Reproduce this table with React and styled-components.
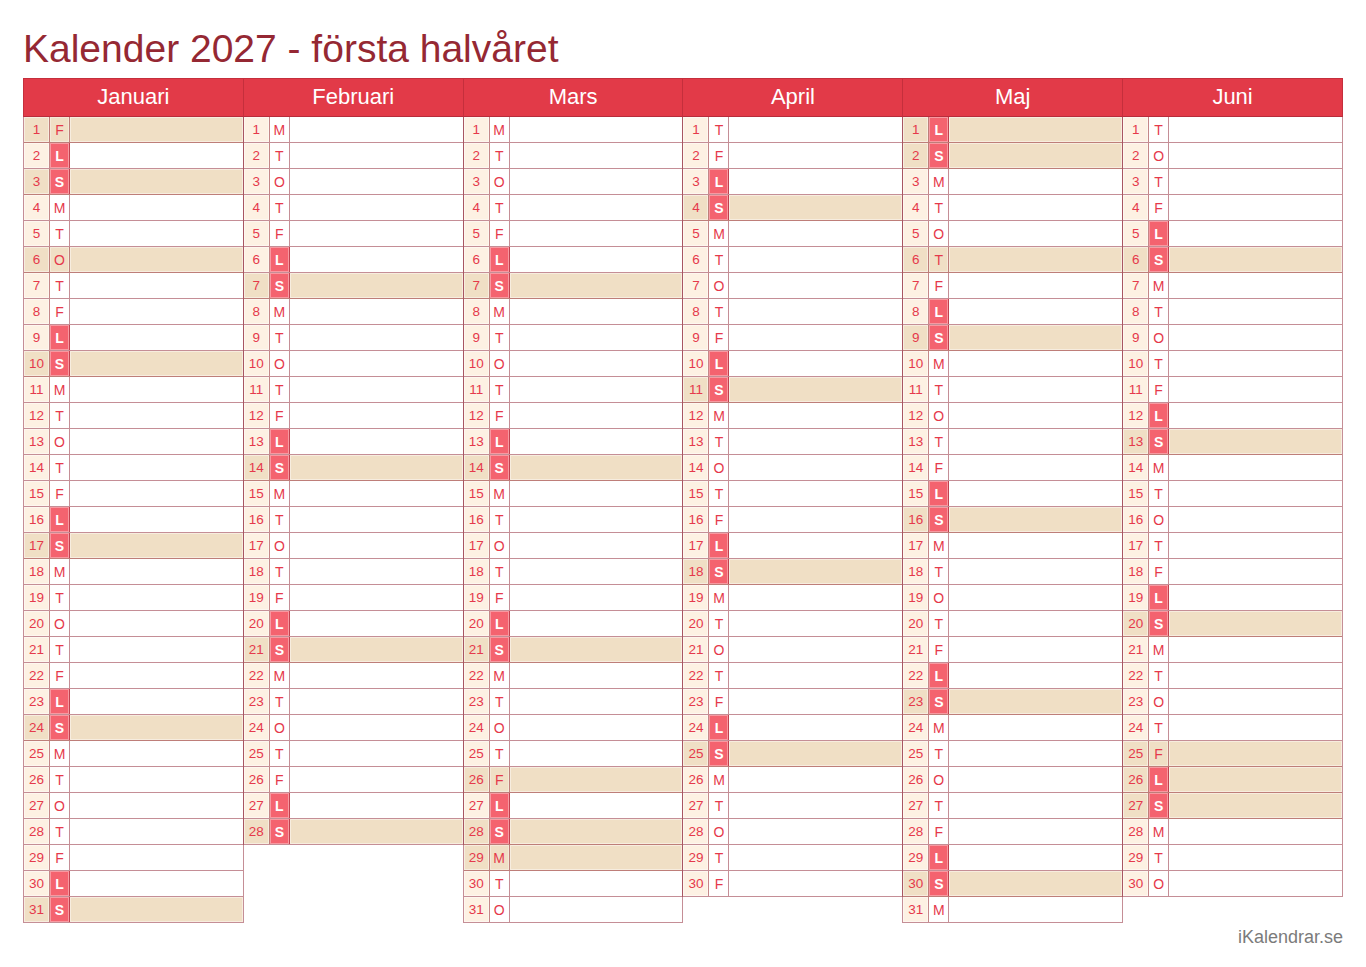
import React from "react";
import styled, { createGlobalStyle } from "styled-components";

const GlobalStyle = createGlobalStyle`
  body {
    margin: 0;
    background: #ffffff;
    font-family: "Liberation Sans", Arial, sans-serif;
  }
`;

const MONTHS = ["Januari", "Februari", "Mars", "April", "Maj", "Juni"];
const LETTERS = ["S", "M", "T", "O", "T", "F", "L"];
// helgdagar that fall on a weekday or a Saturday get the beige row
const HOLIDAYS = ["0-1", "0-6", "2-26", "2-28", "2-29", "4-1", "4-6", "4-16", "5-6", "5-25", "5-26"];

const LINE = "rgba(140, 30, 45, 0.5)";

const Page = styled.div`
  width: 1366px;
  height: 967px;
  padding: 0 23px;
  box-sizing: border-box;
`;

const Title = styled.h1`
  margin: 0 0 10px 0;
  padding-top: 29px;
  font-size: 39px;
  line-height: 39px;
  font-weight: normal;
  color: #952833;
`;

const Grid = styled.div`
  display: flex;
  align-items: flex-start;
`;

const Column = styled.div`
  width: 221px;
  box-sizing: border-box;
  border: 1px solid ${LINE};
  border-top: none;
  margin-left: ${(p) => (p.$first ? "0" : "-1px")};
`;

const MonthHeader = styled.div`
  height: 35px;
  padding-bottom: 2px;
  margin: 0 -1px;
  background: #e23a48;
  border: 1px solid #c52f3c;
  border-bottom: 1px solid ${LINE};
  color: #ffffff;
  font-size: 22px;
  display: flex;
  align-items: center;
  justify-content: center;
`;

const Row = styled.div`
  display: flex;
  height: 25px;
  border-bottom: 1px solid ${LINE};
  background: ${(p) => (p.$marked ? "#f0dfc5" : "#ffffff")};

  &:last-child {
    border-bottom: none;
  }
`;

const NumCell = styled.div`
  width: 25px;
  border-right: 1px solid ${LINE};
  background: ${(p) => (p.$marked ? "#f0dfc5" : "#fdf1e3")};
  box-shadow: inset 0 0 0 1px rgba(255, 255, 255, 0.45);
  color: #e5394b;
  font-size: 13.5px;
  display: flex;
  align-items: center;
  justify-content: center;
`;

const DayCell = styled.div`
  width: 19px;
  border-right: 1px solid ${LINE};
  background: ${(p) => (p.$weekend ? "#f4636f" : p.$marked ? "#f0dfc5" : "#ffffff")};
  box-shadow: inset 0 0 0 1px rgba(255, 255, 255, 0.35);
  color: ${(p) => (p.$weekend ? "#ffffff" : "#e5394b")};
  font-weight: ${(p) => (p.$weekend ? "bold" : "normal")};
  font-size: 14px;
  display: flex;
  align-items: center;
  justify-content: center;
`;

const NoteCell = styled.div`
  flex: 1;
  box-shadow: ${(p) => (p.$marked ? "inset 0 0 0 1px rgba(255, 255, 255, 0.45)" : "none")};
`;

const Footer = styled.div`
  margin-top: 5px;
  text-align: right;
  font-size: 18px;
  line-height: 18px;
  color: #7b7b7b;
`;

const monthDays = (m) => {
  const count = new Date(2027, m + 1, 0).getDate();
  return Array.from({ length: count }, (_, i) => {
    const d = i + 1;
    const wd = new Date(2027, m, d).getDay();
    const weekend = wd === 0 || wd === 6;
    const holiday = HOLIDAYS.includes(`${m}-${d}`);
    return { d, letter: LETTERS[wd], weekend, marked: wd === 0 || holiday };
  });
};

const App = () => (
  <Page>
    <GlobalStyle />
    <Title>Kalender 2027 - första halvåret</Title>
    <Grid>
      {MONTHS.map((name, m) => (
        <Column key={name} $first={m === 0}>
          <MonthHeader>{name}</MonthHeader>
          {monthDays(m).map((day) => (
            <Row key={day.d} $marked={day.marked}>
              <NumCell $marked={day.marked}>{day.d}</NumCell>
              <DayCell $marked={day.marked} $weekend={day.weekend}>
                {day.letter}
              </DayCell>
              <NoteCell $marked={day.marked} />
            </Row>
          ))}
        </Column>
      ))}
    </Grid>
    <Footer>iKalendrar.se</Footer>
  </Page>
);

export default App;
